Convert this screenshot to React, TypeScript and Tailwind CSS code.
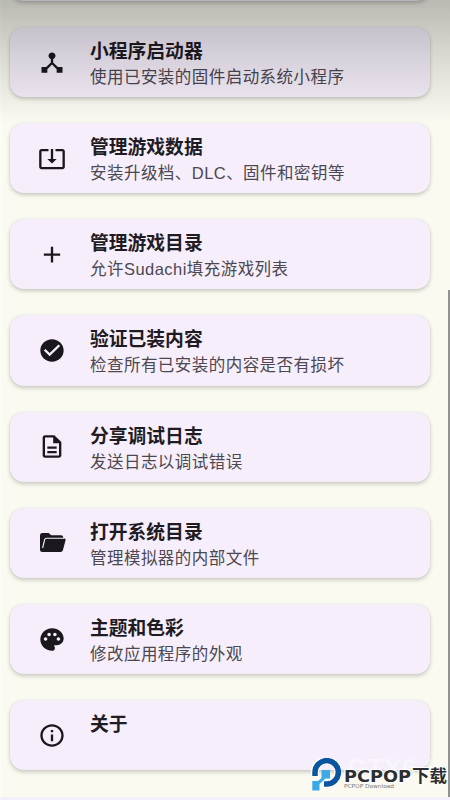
import React from "react";
import {
  MdAdd,
  MdCheckCircle,
  MdDeviceHub,
  MdOutlineDescription,
  MdOutlineInfo,
  MdPalette,
  MdSystemUpdateAlt,
} from "react-icons/md";

const iconClass = "h-[27px] w-[28px]";

function FolderIcon() {
  return (
    <svg viewBox="0 0 28 27" className={iconClass}>
      <path d="M4.500 22.900Q2 22.900 2 20.400V6.400Q2 4 4.400 4H10.700L13.200 6.300H23Q25.100 6.300 25.300 8.500V9.500H26.500Q28 9.500 27.600 11L24.900 21.200Q24.400 22.900 22.600 22.900Z" fill="currentColor" />
      <path d="M4.600 19L6.700 10.500Q7 9.200 8.500 9.200H26" fill="none" stroke="#f6effb" strokeWidth="1.100" />
    </svg>
  );
}

const items = [
  { title: "小程序启动器", text: "使用已安装的固件启动系统小程序", icon: <MdDeviceHub preserveAspectRatio="none" className={iconClass} /> },
  { title: "管理游戏数据", text: "安装升级档、DLC、固件和密钥等", icon: <MdSystemUpdateAlt preserveAspectRatio="none" className={iconClass} /> },
  { title: "管理游戏目录", text: "允许Sudachi填充游戏列表", icon: <MdAdd preserveAspectRatio="none" className={iconClass} /> },
  { title: "验证已装内容", text: "检查所有已安装的内容是否有损坏", icon: <MdCheckCircle preserveAspectRatio="none" className={iconClass} /> },
  { title: "分享调试日志", text: "发送日志以调试错误", icon: <MdOutlineDescription preserveAspectRatio="none" className={iconClass} /> },
  { title: "打开系统目录", text: "管理模拟器的内部文件", icon: <FolderIcon /> },
  { title: "主题和色彩", text: "修改应用程序的外观", icon: <MdPalette preserveAspectRatio="none" className={iconClass} /> },
  { title: "关于", text: "", icon: <MdOutlineInfo preserveAspectRatio="none" className={iconClass} /> },
];

const cardClass =
  "h-[70.2px] w-[420px] shrink-0 rounded-[14px] bg-[#f6effb] shadow-[0_2px_4px_rgba(0,0,0,0.2),0_0_2px_rgba(0,0,0,0.06)]";

function Brand() {
  return (
    <div className="absolute bottom-1.5 right-0 flex h-[36px] w-[139px]">
      <svg viewBox="0 0 30 34" className="h-[34px] w-[30px] shrink-0">
        <path d="M3.500 18V14.500A12 12 0 1 1 15.500 26.500H13" fill="none" stroke="#fff" strokeWidth="8" />
        <path d="M4 18V14.500A11.700 11.700 0 1 1 15.500 26H13" fill="none" stroke="#0b55a0" strokeWidth="5.500" />
        <path d="M10.500 12H19V20.500H14.500L8.500 26V32.500H1.300V23H7L10.500 20Z" fill="#3ba9e6" />
      </svg>
      <svg viewBox="0 0 104 28" className="ml-[3px] mt-[6px] h-[28px] w-[104px] overflow-visible">
        <text x="3" y="13" textLength="92" className="fill-white/40 font-['Liberation_Sans',sans-serif] text-[26px] font-bold">GTX6.8</text>
        <text x="0" y="17.500" textLength="67" lengthAdjust="spacingAndGlyphs" className="fill-[#2d2e31] stroke-white stroke-2 font-['DejaVu_Sans',sans-serif] text-[15.500px] font-bold [paint-order:stroke]">PCPOP</text>
        <text x="68" y="18" textLength="35" lengthAdjust="spacingAndGlyphs" className="fill-[#2d2e31] stroke-white stroke-2 font-['Noto_Sans_CJK_SC',sans-serif] text-[16.500px] font-bold [paint-order:stroke]">下载</text>
        <text x="0" y="24" textLength="50" lengthAdjust="spacingAndGlyphs" className="fill-[#77787a] font-['DejaVu_Sans',sans-serif] text-[5.500px]">PCPOP Download</text>
      </svg>
    </div>
  );
}

export default function App() {
  return (
    <main className="relative flex h-[800px] w-[450px] flex-col overflow-hidden bg-[#fafaf1] font-['Liberation_Sans','Noto_Sans_CJK_SC',sans-serif]">
      <div className="flex h-[797px] shrink-0 justify-between overflow-hidden border-l-2 border-[#fdfdf7]">
        <div className="flex flex-col justify-end gap-[26px] pb-[26.6px] pl-2">
          <div className={cardClass} />
          {items.map((item) => (
            <section key={item.title} className={`${cardClass} flex`}>
              <div className="flex w-[80px] shrink-0 items-center pl-[28px] text-[#1a171d]">{item.icon}</div>
              <div className="flex flex-col pt-[11px]">
                <h2 className="h-[27px] whitespace-nowrap text-[18.800px] font-bold leading-[27px] text-[#1f1b23]">{item.title}</h2>
                <p className="h-[24px] whitespace-nowrap text-[16.500px] leading-[24px] tracking-[0.460px] text-[#4c4751]">{item.text}</p>
              </div>
            </section>
          ))}
        </div>
        <div className="h-[507px] w-0.5 self-end bg-[#929292]" />
      </div>
      <div className="h-[3px] shrink-0 bg-[#f4eff9]" />
      <div className="pointer-events-none absolute inset-x-0 top-0 h-[124px] bg-linear-to-b from-black/26 via-black/13 via-45% to-transparent" />
      <Brand />
    </main>
  );
}
